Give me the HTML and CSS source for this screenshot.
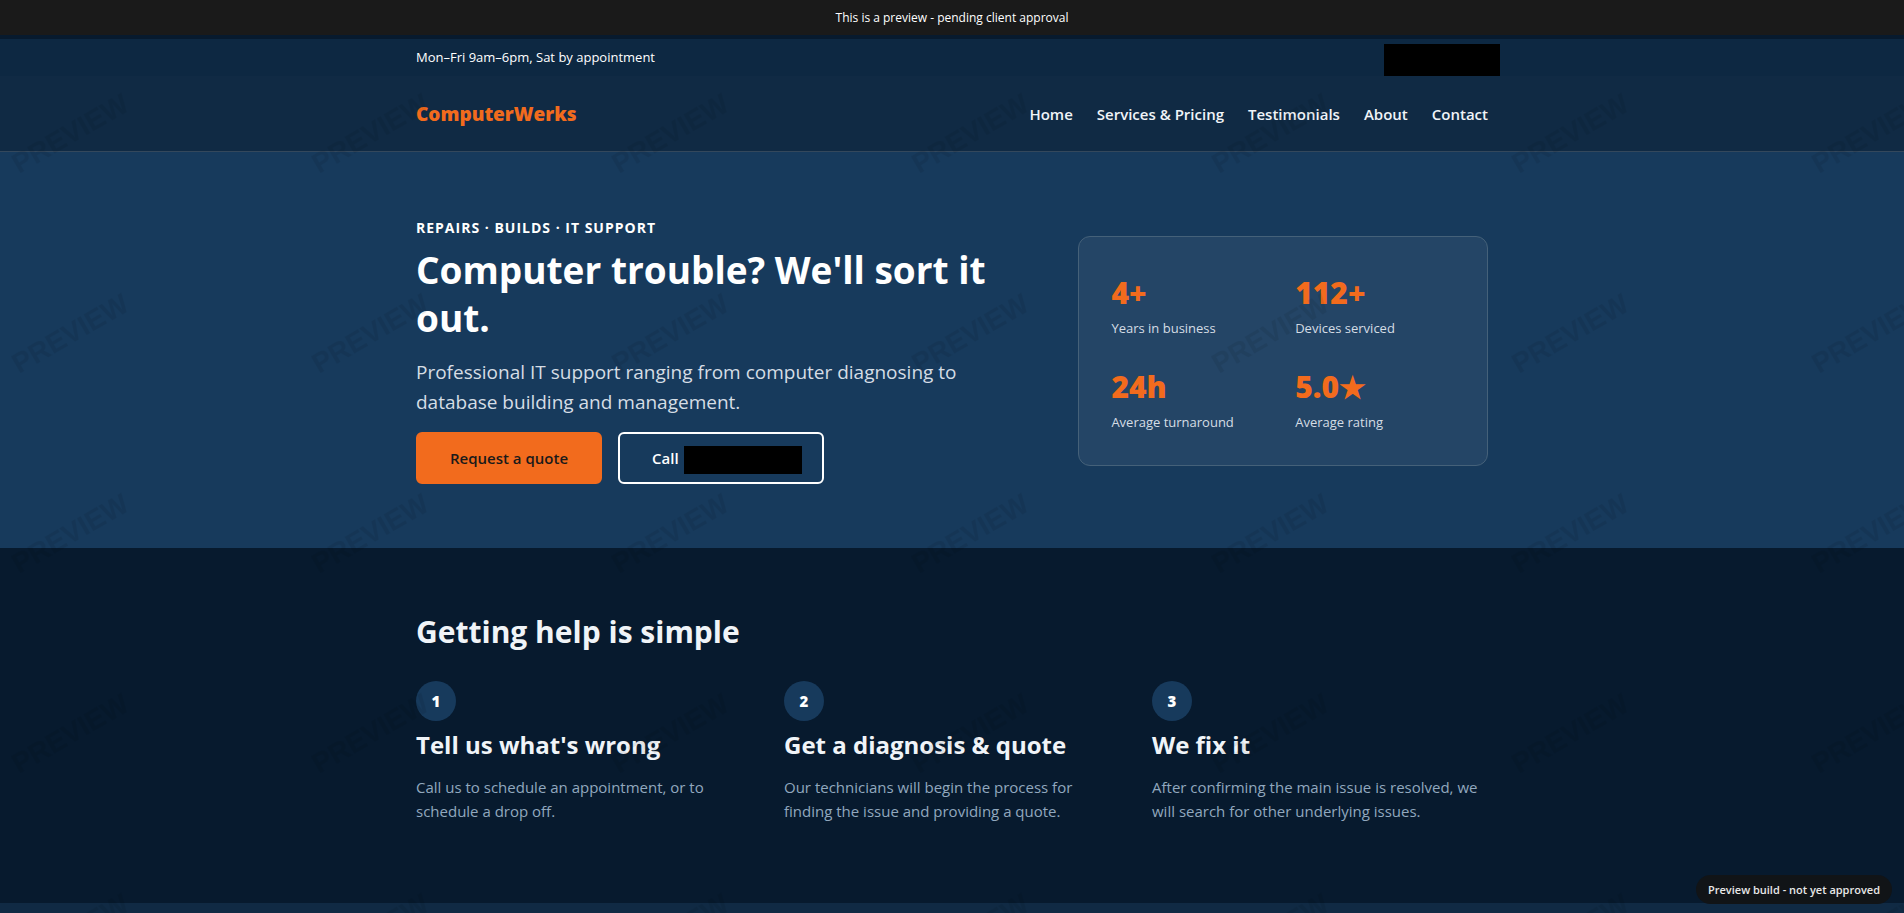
FILE: index.html
```html
<!DOCTYPE html>
<html lang="en">
<head>
<meta charset="utf-8">
<meta name="viewport" content="width=device-width, initial-scale=1">
<title>ComputerWerks</title>
<link rel="stylesheet" href="styles.css">
</head>
<body>
<div class="preview-banner">This is a preview - pending client approval</div>

<div class="topbar">
  <div class="container topbar-inner">
    <span>Mon–Fri 9am–6pm, Sat by appointment</span>
    <a class="redacted topbar-phone" href="#" aria-label="Phone"></a>
  </div>
</div>

<header class="site-header">
  <div class="container header-inner">
    <a class="logo" href="#">ComputerWerks</a>
    <nav class="nav">
      <a href="#">Home</a>
      <a href="#">Services &amp; Pricing</a>
      <a href="#">Testimonials</a>
      <a href="#">About</a>
      <a href="#">Contact</a>
    </nav>
  </div>
</header>

<main class="main">
  <section class="hero">
    <div class="container hero-grid">
      <div>
        <p class="eyebrow">Repairs · Builds · IT Support</p>
        <h1 class="hero-title">Computer trouble? We'll sort it out.</h1>
        <p class="hero-text">Professional IT support ranging from computer diagnosing to database building and management.</p>
        <div class="actions">
          <a class="btn btn-primary" href="#">Request a quote</a>
          <a class="btn btn-outline" href="#">Call <span class="redacted btn-phone"></span></a>
        </div>
      </div>
      <div class="stats">
        <div><div class="stat-value">4+</div><div class="stat-label">Years in business</div></div>
        <div><div class="stat-value">112+</div><div class="stat-label">Devices serviced</div></div>
        <div><div class="stat-value">24h</div><div class="stat-label">Average turnaround</div></div>
        <div><div class="stat-value">5.0★</div><div class="stat-label">Average rating</div></div>
      </div>
    </div>
  </section>

  <section class="steps">
    <div class="container">
      <h2 class="section-title">Getting help is simple</h2>
      <div class="steps-grid">
        <div>
          <div class="step-number">1</div>
          <h3 class="step-title">Tell us what's wrong</h3>
          <p class="step-text">Call us to schedule an appointment, or to schedule a drop off.</p>
        </div>
        <div>
          <div class="step-number">2</div>
          <h3 class="step-title">Get a diagnosis &amp; quote</h3>
          <p class="step-text">Our technicians will begin the process for finding the issue and providing a quote.</p>
        </div>
        <div>
          <div class="step-number">3</div>
          <h3 class="step-title">We fix it</h3>
          <p class="step-text">After confirming the main issue is resolved, we will search for other underlying issues.</p>
        </div>
      </div>
    </div>
  </section>
  <section class="next-section"></section>
</main>

<svg class="watermark" aria-hidden="true">
  <defs>
    <pattern id="preview-mark" width="300" height="200" patternUnits="userSpaceOnUse">
      <text class="watermark-text" transform="translate(19 174) rotate(-30)">PREVIEW</text>
    </pattern>
  </defs>
  <rect width="100%" height="100%" fill="url(#preview-mark)"/>
</svg>
<div class="preview-badge">Preview build - not yet approved</div>
</body>
</html>
```
FILE: styles.css
```css
* {
  box-sizing: border-box;
}

body {
  display: flex;
  flex-direction: column;
  min-height: 100vh;
  margin: 0;
  background: #071a2e;
  color: #f0f4f8;
  font-family: "Open Sans", "Noto Sans", sans-serif;
  font-size: 15px;
  line-height: 24px;
}

h1, h2, h3, p {
  margin: 0;
}

a {
  color: inherit;
  text-decoration: none;
}

.container {
  width: 100%;
  max-width: 1120px;
  margin: 0 auto;
  padding: 0 24px;
}

.redacted {
  background: #000;
}

.preview-banner {
  position: relative;
  z-index: 2;
  margin-bottom: 4px;
  padding: 8px;
  background: #1a1a1a;
  color: #fff;
  font-size: 12px;
  font-weight: 500;
  line-height: 19px;
  text-align: center;
}

.topbar {
  background: #0d2842;
  color: #fff;
  font-size: 13px;
}

.topbar-inner {
  display: flex;
  justify-content: space-between;
  align-items: flex-start;
}

.topbar-inner > span {
  padding: 8px 0;
  line-height: 21px;
}

.topbar-phone {
  width: 116px;
  height: 32px;
  margin: 5px -12px 0 0;
}

.site-header {
  background: #102a44;
  border-bottom: 1px solid #34485c;
}

.header-inner {
  display: flex;
  justify-content: space-between;
  align-items: center;
  min-height: 75px;
}

.logo {
  color: #f26b1d;
  font-size: 19px;
  font-weight: 800;
  line-height: 24px;
}

.nav {
  display: flex;
  gap: 24px;
  font-weight: 600;
}

.main {
  display: flex;
  flex: 1;
  flex-direction: column;
}

.hero {
  padding: 65px 0 64px;
  background: #173a5c;
}

.hero-grid {
  display: grid;
  grid-template-columns: 3fr 2fr;
  gap: 48px;
  align-items: center;
}

.eyebrow {
  margin-bottom: 8px;
  color: #fff;
  font-size: 14px;
  font-weight: 700;
  letter-spacing: 1px;
  line-height: 21px;
  text-transform: uppercase;
}

.hero-title {
  margin-bottom: 15px;
  color: #fff;
  font-size: 37px;
  font-weight: 700;
  line-height: 48px;
}

.hero-text {
  margin-bottom: 15px;
  color: #d5dde5;
  font-size: 19px;
  line-height: 30px;
}

.actions {
  display: flex;
  gap: 16px;
}

.btn {
  display: flex;
  align-items: center;
  min-height: 52px;
  padding: 0 32px;
  border: 2px solid #fff;
  border-radius: 6px;
  color: #fff;
  font-weight: 600;
}

.btn-primary {
  border-color: #f26b1d;
  background: #f26b1d;
  color: #1a1a1a;
}

.btn-outline {
  gap: 5px;
  padding-right: 20px;
}

.btn-phone {
  width: 118px;
  height: 28px;
  margin-top: 4px;
}

.stats {
  display: grid;
  grid-template-columns: 1fr 1fr;
  gap: 24px;
  padding: 32px;
  border: 1px solid #456179;
  border-radius: 12px;
  background: #244566;
}

.stat-value {
  color: #f26b1d;
  font-size: 30px;
  font-weight: 800;
  line-height: 48px;
}

.stat-label {
  color: #d5dde5;
  font-size: 13px;
  line-height: 22px;
}

.steps {
  padding: 64px 0 80px;
}

.section-title {
  margin-bottom: 29px;
  font-size: 30px;
  font-weight: 700;
  line-height: 40px;
}

.steps-grid {
  display: grid;
  grid-template-columns: repeat(3, 1fr);
  gap: 32px;
}

.step-number {
  display: grid;
  place-items: center;
  width: 40px;
  height: 40px;
  margin-bottom: 8px;
  border-radius: 50%;
  background: #173a5c;
  color: #fff;
  font-weight: 800;
}

.step-title {
  margin-bottom: 14px;
  font-size: 24px;
  font-weight: 700;
  line-height: 32px;
}

.step-text {
  color: #91a8be;
}

.next-section {
  flex: 1;
  background: #102a44;
}

.watermark {
  position: fixed;
  inset: 0;
  width: 100%;
  height: 100%;
  pointer-events: none;
}

.watermark-text {
  fill: #000;
  fill-opacity: 0.07;
  font-family: "Liberation Sans", Arial, sans-serif;
  font-size: 28px;
  font-weight: 700;
}

.preview-badge {
  position: fixed;
  z-index: 2;
  right: 12px;
  bottom: 9px;
  padding: 4px 12px;
  border-radius: 16px;
  background: #111417;
  color: #e8e8e8;
  font-size: 11px;
  font-weight: 600;
  line-height: 21px;
}
```
